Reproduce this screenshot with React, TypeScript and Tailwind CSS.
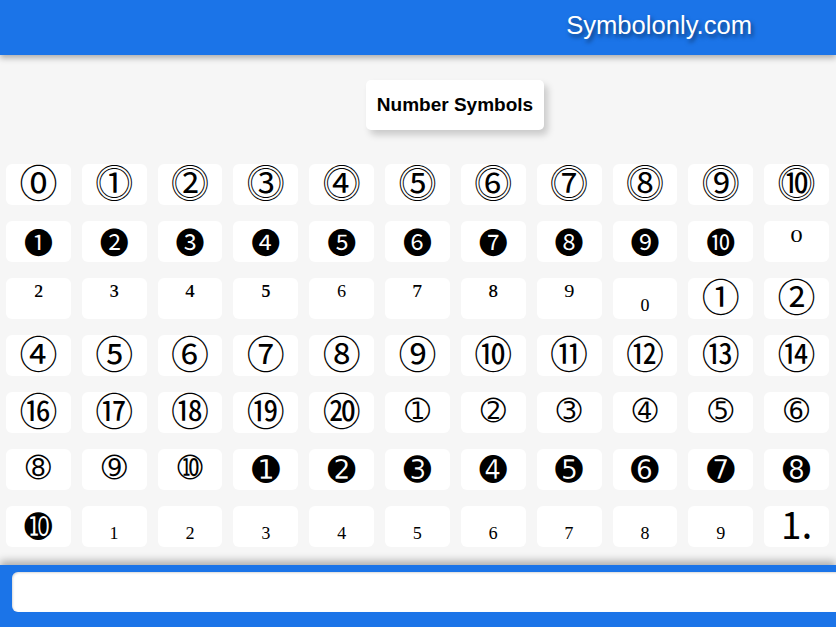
const rows: string[][] = [
  ["⓪", "⓵", "⓶", "⓷", "⓸", "⓹", "⓺", "⓻", "⓼", "⓽", "⓾"],
  ["❶", "❷", "❸", "❹", "❺", "❻", "❼", "❽", "❾", "❿", "⁰"],
  ["²", "³", "⁴", "⁵", "⁶", "⁷", "⁸", "⁹", "₀", "①", "②"],
  ["④", "⑤", "⑥", "⑦", "⑧", "⑨", "⑩", "⑪", "⑫", "⑬", "⑭"],
  ["⑯", "⑰", "⑱", "⑲", "⑳", "➀", "➁", "➂", "➃", "➄", "➅"],
  ["➇", "➈", "➉", "➊", "➋", "➌", "➍", "➎", "➏", "➐", "➑"],
  ["➓", "₁", "₂", "₃", "₄", "₅", "₆", "₇", "₈", "₉", "⒈"],
];

const symbols = rows.flat();

// glyphs come from different fallback fonts, each sized to match
const glyphClass = (s: string) => {
  const c = s.codePointAt(0) ?? 0;
  if (c === 0x24ea || (c >= 0x24f5 && c <= 0x24fe) || (c >= 0x2460 && c <= 0x2473) || (c >= 0x2488 && c <= 0x249b))
    return "font-['Noto_Sans_CJK_JP',sans-serif] text-[38px] pb-[7px]";
  if (c >= 0x2776 && c <= 0x277f) return "font-['Noto_Sans_CJK_JP',sans-serif] text-[29px]";
  if (c >= 0x2780 && c <= 0x2789) return "font-['DejaVu_Sans',sans-serif] text-[30px] pb-[3px]";
  if (c >= 0x278a && c <= 0x2793) return "font-['DejaVu_Sans',sans-serif] text-[33px]";
  if (c === 0x2070) return "font-['DejaVu_Serif',serif] text-[30px]";
  return "font-['Liberation_Serif','DejaVu_Serif',serif] text-[30px] pb-[8px]";
};

export default function App() {
  return (
    <div className="h-screen w-full flex flex-col bg-[#f6f6f6] overflow-hidden font-['Liberation_Sans',Arial,sans-serif]">
      {/* Header */}
      <header className="h-[55px] shrink-0 bg-[#1b74e8] flex items-start justify-end pr-[84px] pt-[6px] shadow-[0_3px_6px_rgba(0,0,0,0.3)] z-10">
        <span className="text-white text-[25.6px] [text-shadow:2px_3px_4px_rgba(0,0,0,0.5)]">
          Symbolonly.com
        </span>
      </header>

      {/* Content */}
      <main className="flex-1 overflow-hidden">
        <div className="flex pt-[25px] pl-[366px]">
          <div className="bg-white rounded-[5px] w-[178px] h-[50px] flex items-center justify-center shadow-[4px_5px_7px_rgba(0,0,0,0.18)]">
            <h3 className="text-[19px] font-bold text-black">Number Symbols</h3>
          </div>
        </div>

        <div className="grid grid-cols-11 gap-x-[11px] gap-y-[16px] pl-[6px] pr-[7px] mt-[34px]">
          {symbols.map((s, i) => (
            <div
              key={i}
              className={`bg-white rounded-md h-[41px] flex items-center justify-center leading-none text-black ${glyphClass(s)}`}
            >
              {s}
            </div>
          ))}
        </div>
      </main>

      {/* Footer */}
      <footer className="h-[62px] shrink-0 bg-[#1b74e8] flex items-start pt-[7px] pl-[12px] overflow-hidden shadow-[0_-4px_8px_rgba(0,0,0,0.3)] z-10">
        <div className="h-[40px] min-w-[840px] bg-white rounded-md shadow-[inset_1px_1px_2px_rgba(0,0,0,0.15)]" />
      </footer>
    </div>
  );
}
